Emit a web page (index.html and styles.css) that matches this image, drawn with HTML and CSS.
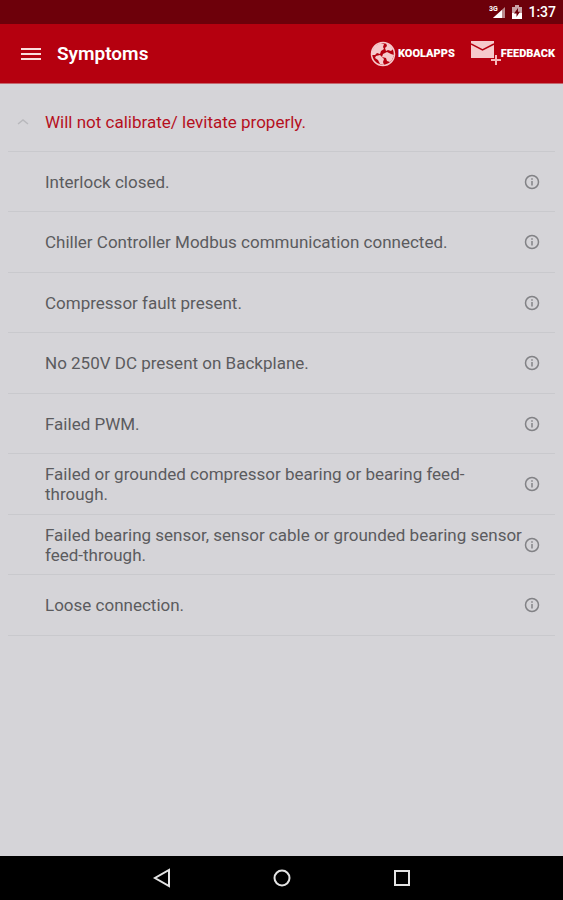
FILE: index.html
```html
<!DOCTYPE html>
<html lang="en">
<head>
  <meta charset="UTF-8" />
  <meta name="viewport" content="width=device-width, initial-scale=1.0"/>
  <title>Symptoms</title>
  <link rel="stylesheet" href="styles.css">
</head>
<body>
  <div class="status-bar">
    <svg class="signal" width="18" height="14" viewBox="0 0 18 14" aria-hidden="true">
      <path d="M16 2v11H4z" fill="#b98a8e"/>
      <path d="M13 5v8H4z" fill="#fff"/>
      <text x="0" y="6">3G</text>
    </svg>
    <svg class="battery" width="10" height="14" viewBox="0 0 10 14" aria-hidden="true">
      <path d="M3 0h4v2h3v12H0V2h3z" fill="#c9a3a6"/>
      <path d="M0 8h10v6H0z" fill="#fff"/>
      <path d="M6 3L2 8.500h2.500V12L8 6.800H6z" fill="#6d000a"/>
    </svg>
    <span class="clock">1:37</span>
  </div>

  <header class="toolbar">
    <button class="menu-btn" type="button" aria-label="Menu">
      <svg width="20" height="14" viewBox="0 0 20 14">
        <path d="M0 2h20M0 7h20M0 12h20" stroke="#fbdcdc" stroke-width="2"/>
      </svg>
    </button>
    <h1>Symptoms</h1>
    <a class="action" href="#koolapps">
      <svg width="26" height="26" viewBox="0 0 26 26" aria-hidden="true">
        <circle cx="13" cy="13" r="11.500" fill="#b5000f" stroke="#f6c9cb" stroke-width="1.500"/>
        <path d="M2 10l3-5 5-3 4 1-1 3 1 2-3 2-1 3-3-1-2 2-3 0z" fill="#f6c9cb"/>
        <path d="M16 2l4 2 3 4-2 2-3-1-2 1-1-3 2-2z" fill="#f6c9cb"/>
        <path d="M13 13l4-2 4 2 3 1-2 5-2 2-3-1-1-3-4-1z" fill="#f6c9cb"/>
        <path d="M6 15l4-1 4 4-1 3 1 3-4-1-2-4-3-2z" fill="#f6c9cb"/>
      </svg>
      <span>KOOLAPPS</span>
    </a>
    <a class="action feedback" href="#feedback">
      <svg width="30" height="26" viewBox="0 0 30 26" aria-hidden="true">
        <path d="M0 0h23v17H0z" fill="#f6c9cb"/>
        <path d="M0 3l11.500 6L23 3" fill="none" stroke="#b5000f" stroke-width="1.500"/>
        <path d="M25 13v12M19 19h12" stroke="#b5000f" stroke-width="4"/>
        <path d="M25 14v10M20 19h10" stroke="#f6b9bb" stroke-width="2"/>
      </svg>
      <span>FEEDBACK</span>
    </a>
  </header>

  <main>
    <h2 class="group">
      <button class="group-btn" type="button" aria-expanded="true">
        <svg width="12" height="8" viewBox="0 0 12 8" aria-hidden="true">
          <path d="M1 6l5-4 5 4" fill="none" stroke="#b8b8bc" stroke-width="1.500"/>
        </svg>
        <span>Will not calibrate/ levitate properly.</span>
      </button>
    </h2>
    <ul class="symptoms">
      <li>
        <span>Interlock closed.</span>
        <button class="info" type="button" aria-label="Info"><svg width="16" height="16"><use href="#info"/></svg></button>
      </li>
      <li>
        <span>Chiller Controller Modbus communication connected.</span>
        <button class="info" type="button" aria-label="Info"><svg width="16" height="16"><use href="#info"/></svg></button>
      </li>
      <li>
        <span>Compressor fault present.</span>
        <button class="info" type="button" aria-label="Info"><svg width="16" height="16"><use href="#info"/></svg></button>
      </li>
      <li>
        <span>No 250V DC present on Backplane.</span>
        <button class="info" type="button" aria-label="Info"><svg width="16" height="16"><use href="#info"/></svg></button>
      </li>
      <li>
        <span>Failed PWM.</span>
        <button class="info" type="button" aria-label="Info"><svg width="16" height="16"><use href="#info"/></svg></button>
      </li>
      <li>
        <span>Failed or grounded compressor bearing or bearing feed-through.</span>
        <button class="info" type="button" aria-label="Info"><svg width="16" height="16"><use href="#info"/></svg></button>
      </li>
      <li>
        <span>Failed bearing sensor, sensor cable or grounded bearing sensor feed-through.</span>
        <button class="info" type="button" aria-label="Info"><svg width="16" height="16"><use href="#info"/></svg></button>
      </li>
      <li>
        <span>Loose connection.</span>
        <button class="info" type="button" aria-label="Info"><svg width="16" height="16"><use href="#info"/></svg></button>
      </li>
    </ul>
  </main>

  <nav class="nav-bar">
    <button type="button" aria-label="Back">
      <svg width="20" height="20" viewBox="0 0 20 20"><path d="M17 2v16L3 10z"/></svg>
    </button>
    <button type="button" aria-label="Home">
      <svg width="20" height="20" viewBox="0 0 20 20"><circle cx="10" cy="10" r="7.500"/></svg>
    </button>
    <button type="button" aria-label="Recent apps">
      <svg width="20" height="20" viewBox="0 0 20 20"><path d="M3 3h14v14H3z"/></svg>
    </button>
  </nav>

  <svg class="sprite" width="0" height="0" aria-hidden="true">
    <symbol id="info" viewBox="0 0 16 16">
      <circle cx="8" cy="8" r="6.500" fill="none" stroke="#828286" stroke-width="1.500"/>
      <path d="M8 4.300v1.500M8 7v4.500" stroke="#828286" stroke-width="1.500"/>
    </symbol>
  </svg>
</body>
</html>
```

FILE: styles.css
```css
* {
  box-sizing: border-box;
}

body {
  margin: 0;
  min-height: 100vh;
  display: flex;
  flex-direction: column;
  font-family: Roboto, "Liberation Sans", sans-serif;
  background: #d5d4d8;
  color: #5b5b5e;
}

button {
  display: flex;
  align-items: center;
  padding: 0;
  border: none;
  background: none;
  font: inherit;
  color: inherit;
  cursor: pointer;
}

.status-bar {
  display: flex;
  align-items: center;
  justify-content: flex-end;
  height: 24px;
  padding-right: 7px;
  background: #6d000a;
  color: #fff;
}

.signal text {
  font-size: 7px;
  font-weight: bold;
  fill: #fff;
}

.battery {
  margin: 0 6px 0 5px;
}

.clock {
  font-size: 14px;
  font-weight: 500;
}

.toolbar {
  display: flex;
  align-items: center;
  height: 60px;
  padding: 0 8px 0 21px;
  background: #b5000f;
  border-bottom: 1px solid #c4686f;
  color: #fff;
}

.toolbar h1 {
  flex: 1;
  margin: 0 0 0 16px;
  font-size: 19px;
  line-height: 24px;
  font-weight: 600;
}

.action {
  display: flex;
  align-items: center;
  gap: 2px;
  color: #fff;
  font-size: 11px;
  font-weight: 900;
  text-decoration: none;
}

.feedback {
  gap: 0;
  margin-left: 16px;
}

main {
  flex: 1;
  padding: 0 8px;
}

.group {
  margin: 0;
  border-bottom: 1px solid #c9c9cd;
  font-size: 17px;
  line-height: 20px;
  font-weight: 400;
}

.group-btn {
  width: 100%;
  height: 67px;
  padding: 8px 0 0 9px;
  gap: 16px;
  color: #b5101e;
}

.symptoms {
  margin: 0;
  padding: 0;
  list-style: none;
  font-size: 17px;
  line-height: 20px;
}

.symptoms li {
  display: flex;
  align-items: center;
  min-height: 60px;
  padding: 0 15px 0 37px;
  border-bottom: 1px solid #c9c9cd;
}

.symptoms li:nth-child(even) {
  min-height: 61px;
}

.symptoms li span {
  flex: 1;
}

.nav-bar {
  display: flex;
  align-items: center;
  justify-content: center;
  gap: 100px;
  height: 44px;
  background: #000;
}

.nav-bar svg {
  fill: none;
  stroke: #e4e4e4;
  stroke-width: 2;
}

.sprite {
  position: absolute;
}
```
